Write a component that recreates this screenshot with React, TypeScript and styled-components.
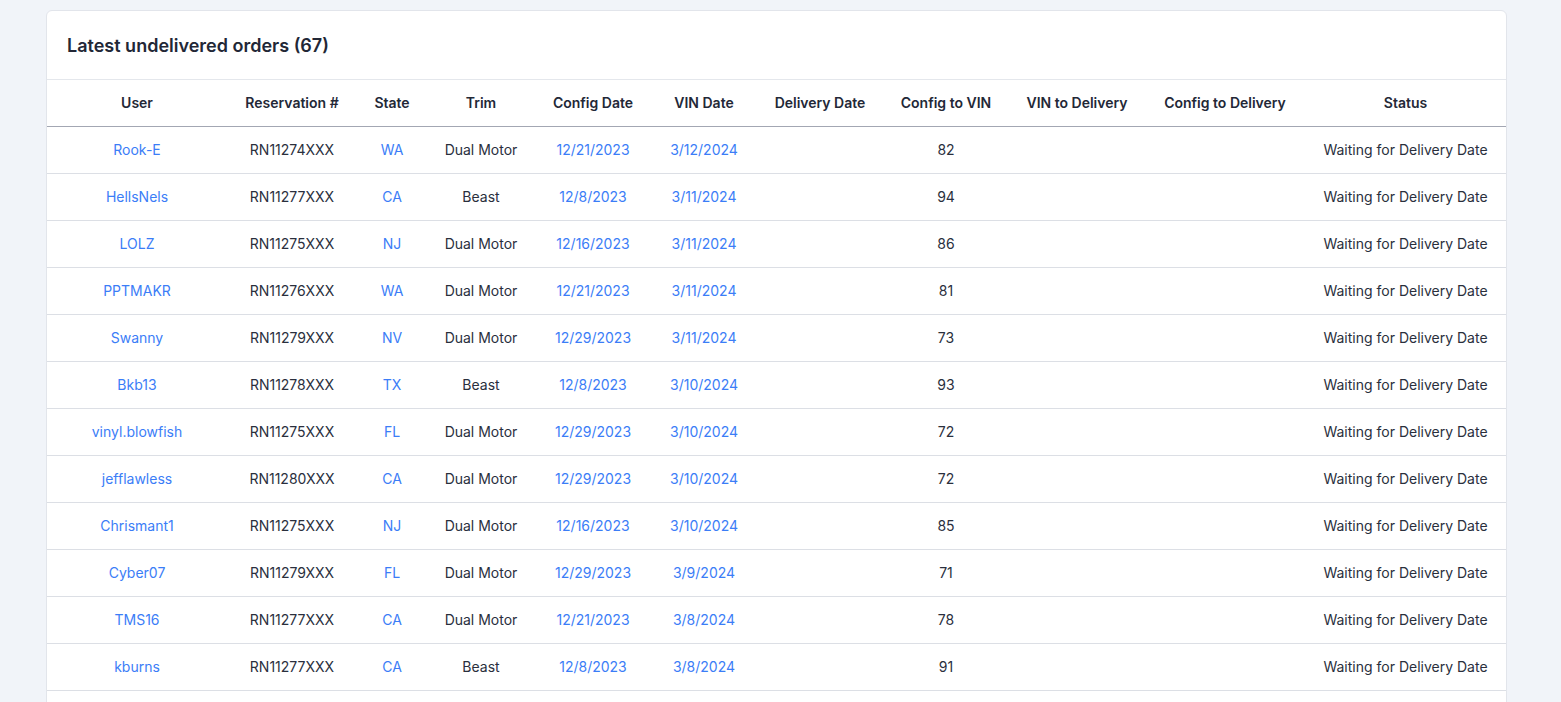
import { createGlobalStyle, styled } from "styled-components";

const GlobalStyle = createGlobalStyle`
  body {
    margin: 0;
    background: #f1f4f9;
    font-family: Inter, "Noto Sans", "Liberation Sans", sans-serif;
    color: #272c3a;
  }
`;

type Order = {
  user: string;
  reservation: string;
  state: string;
  trim: string;
  configDate: string;
  vinDate: string;
  configToVin: number;
};

const orders: Order[] = [
  { user: "Rook-E", reservation: "RN11274XXX", state: "WA", trim: "Dual Motor", configDate: "12/21/2023", vinDate: "3/12/2024", configToVin: 82 },
  { user: "HellsNels", reservation: "RN11277XXX", state: "CA", trim: "Beast", configDate: "12/8/2023", vinDate: "3/11/2024", configToVin: 94 },
  { user: "LOLZ", reservation: "RN11275XXX", state: "NJ", trim: "Dual Motor", configDate: "12/16/2023", vinDate: "3/11/2024", configToVin: 86 },
  { user: "PPTMAKR", reservation: "RN11276XXX", state: "WA", trim: "Dual Motor", configDate: "12/21/2023", vinDate: "3/11/2024", configToVin: 81 },
  { user: "Swanny", reservation: "RN11279XXX", state: "NV", trim: "Dual Motor", configDate: "12/29/2023", vinDate: "3/11/2024", configToVin: 73 },
  { user: "Bkb13", reservation: "RN11278XXX", state: "TX", trim: "Beast", configDate: "12/8/2023", vinDate: "3/10/2024", configToVin: 93 },
  { user: "vinyl.blowfish", reservation: "RN11275XXX", state: "FL", trim: "Dual Motor", configDate: "12/29/2023", vinDate: "3/10/2024", configToVin: 72 },
  { user: "jefflawless", reservation: "RN11280XXX", state: "CA", trim: "Dual Motor", configDate: "12/29/2023", vinDate: "3/10/2024", configToVin: 72 },
  { user: "Chrismant1", reservation: "RN11275XXX", state: "NJ", trim: "Dual Motor", configDate: "12/16/2023", vinDate: "3/10/2024", configToVin: 85 },
  { user: "Cyber07", reservation: "RN11279XXX", state: "FL", trim: "Dual Motor", configDate: "12/29/2023", vinDate: "3/9/2024", configToVin: 71 },
  { user: "TMS16", reservation: "RN11277XXX", state: "CA", trim: "Dual Motor", configDate: "12/21/2023", vinDate: "3/8/2024", configToVin: 78 },
  { user: "kburns", reservation: "RN11277XXX", state: "CA", trim: "Beast", configDate: "12/8/2023", vinDate: "3/8/2024", configToVin: 91 },
];

const columns = [
  { label: "User", width: 180 },
  { label: "Reservation #", width: 130 },
  { label: "State", width: 70 },
  { label: "Trim", width: 108 },
  { label: "Config Date", width: 116 },
  { label: "VIN Date", width: 106 },
  { label: "Delivery Date", width: 126 },
  { label: "Config to VIN", width: 126 },
  { label: "VIN to Delivery", width: 136 },
  { label: "Config to Delivery", width: 160 },
  { label: "Status", width: 201 },
];

const Page = styled.main`
  padding: 10px 54px 0 46px;
`;

const Card = styled.section`
  background: #ffffff;
  border: 1px solid #e2e5eb;
  border-radius: 6px;
  overflow: hidden;
`;

const CardHeader = styled.header`
  height: 68px;
  display: flex;
  align-items: center;
  padding: 0 20px;
  border-bottom: 1px solid #e4e7ec;
`;

const Title = styled.h2`
  margin: 0;
  font-size: 18px;
  font-weight: 600;
  color: #222736;
`;

const Table = styled.table`
  width: 100%;
  border-collapse: collapse;
  table-layout: fixed;
  font-size: 14px;
`;

const HeadCell = styled.th`
  height: 44px;
  padding: 0 4px 2px;
  font-weight: 600;
  text-align: center;
  color: #232837;
  border-bottom: 1px solid #a3a7b3;
  white-space: nowrap;
`;

const Row = styled.tr`
  border-bottom: 1px solid #dcdfe5;
`;

const Cell = styled.td`
  height: 44px;
  padding: 0 4px 2px;
  text-align: center;
  white-space: nowrap;
  color: #2a2f3d;
`;

const Link = styled.a`
  color: #3b7df7;
  text-decoration: none;
  cursor: pointer;
`;

export default function App() {
  return (
    <>
      <GlobalStyle />
      <Page>
        <Card>
          <CardHeader>
            <Title>Latest undelivered orders (67)</Title>
          </CardHeader>
          <Table>
            <colgroup>
              {columns.map((c) => (
                <col key={c.label} style={{ width: c.width }} />
              ))}
            </colgroup>
            <thead>
              <tr>
                {columns.map((c) => (
                  <HeadCell key={c.label}>{c.label}</HeadCell>
                ))}
              </tr>
            </thead>
            <tbody>
              {orders.map((o, i) => (
                <Row key={i}>
                  <Cell>
                    <Link>{o.user}</Link>
                  </Cell>
                  <Cell>{o.reservation}</Cell>
                  <Cell>
                    <Link>{o.state}</Link>
                  </Cell>
                  <Cell>{o.trim}</Cell>
                  <Cell>
                    <Link>{o.configDate}</Link>
                  </Cell>
                  <Cell>
                    <Link>{o.vinDate}</Link>
                  </Cell>
                  <Cell />
                  <Cell>{o.configToVin}</Cell>
                  <Cell />
                  <Cell />
                  <Cell>Waiting for Delivery Date</Cell>
                </Row>
              ))}
              <Row>
                <Cell colSpan={columns.length} />
              </Row>
            </tbody>
          </Table>
        </Card>
      </Page>
    </>
  );
}
